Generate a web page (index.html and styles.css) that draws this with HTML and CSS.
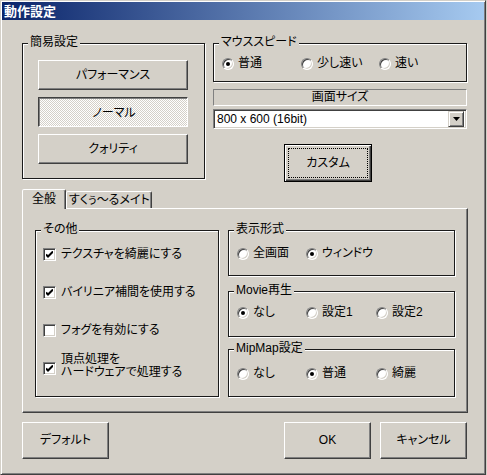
FILE: index.html
```html
<!DOCTYPE html>
<html lang="ja">
<head>
<meta charset="utf-8">
<title>動作設定</title>
<link rel="stylesheet" href="styles.css">
</head>
<body>
<div class="window">
  <div class="titlebar">動作設定</div>
  <div class="content">
    <div class="top-row">
      <div class="group group-easy">
        <span class="group-label">簡易設定</span>
        <div class="easy-buttons">
          <button class="btn btn-wide">パフォーマンス</button>
          <button class="btn btn-wide btn-pressed"><span class="pressed-text">ノーマル</span></button>
          <button class="btn btn-wide">クォリティ</button>
        </div>
      </div>
      <div class="right-col">
        <div class="group group-mouse">
          <span class="group-label">マウススピード</span>
          <div class="radio-row">
            <label class="radio-item w79"><span class="radio checked"></span>普通</label>
            <label class="radio-item w78"><span class="radio"></span>少し速い</label>
            <label class="radio-item"><span class="radio"></span>速い</label>
          </div>
        </div>
        <div class="header-bar">画面サイズ</div>
        <div class="select">
          <span class="select-text">800 x 600 (16bit)</span>
          <span class="select-btn"><svg width="7" height="4" viewBox="0 0 7 4"><path d="M0 0h7L3.5 4z" fill="#000"/></svg></span>
        </div>
        <button class="btn btn-default">カスタム</button>
      </div>
    </div>

    <div class="tabs">
      <div class="tab tab-active">全般</div>
      <div class="tab">すくぅ〜るメイト</div>
    </div>
    <div class="panel">
      <div class="group group-other">
        <span class="group-label">その他</span>
        <div class="check-list">
          <label class="check-item"><span class="checkbox checked"><svg width="7" height="7" viewBox="0 0 7 7"><path d="M0 2.5l2 2 5-5" fill="none" stroke="#000" stroke-width="2" transform="translate(0 1)"/></svg></span><span>テクスチャを綺麗にする</span></label>
          <label class="check-item"><span class="checkbox checked"><svg width="7" height="7" viewBox="0 0 7 7"><path d="M0 2.5l2 2 5-5" fill="none" stroke="#000" stroke-width="2" transform="translate(0 1)"/></svg></span><span>バイリニア補間を使用する</span></label>
          <label class="check-item"><span class="checkbox"></span><span>フォグを有効にする</span></label>
          <label class="check-item check-multi"><span class="checkbox checked"><svg width="7" height="7" viewBox="0 0 7 7"><path d="M0 2.5l2 2 5-5" fill="none" stroke="#000" stroke-width="2" transform="translate(0 1)"/></svg></span><span class="multi-text">頂点処理を<br>ハードウェアで処理する</span></label>
        </div>
      </div>
      <div class="panel-right">
        <div class="group group-display">
          <span class="group-label">表示形式</span>
          <div class="radio-row">
            <label class="radio-item w69"><span class="radio"></span>全画面</label>
            <label class="radio-item"><span class="radio checked"></span>ウィンドウ</label>
          </div>
        </div>
        <div class="group group-movie">
          <span class="group-label">Movie再生</span>
          <div class="radio-row">
            <label class="radio-item w69"><span class="radio checked"></span>なし</label>
            <label class="radio-item w70"><span class="radio"></span>設定1</label>
            <label class="radio-item"><span class="radio"></span>設定2</label>
          </div>
        </div>
        <div class="group group-mip">
          <span class="group-label">MipMap設定</span>
          <div class="radio-row">
            <label class="radio-item w69"><span class="radio"></span>なし</label>
            <label class="radio-item w70"><span class="radio checked"></span>普通</label>
            <label class="radio-item"><span class="radio"></span>綺麗</label>
          </div>
        </div>
      </div>
    </div>

    <div class="bottom-row">
      <button class="btn btn-bottom">デフォルト</button>
      <button class="btn btn-bottom btn-ok">OK</button>
      <button class="btn btn-bottom btn-cancel">キャンセル</button>
    </div>
  </div>
</div>
</body>
</html>
```
FILE: styles.css
```css
* { box-sizing: border-box; }
html, body { margin: 0; padding: 0; }
body {
  background: #D4D0C8;
  font-family: "Liberation Sans", "Noto Sans CJK JP", sans-serif;
  font-size: 12px;
  line-height: 13px;
  color: #000;
  font-feature-settings: "palt";
}
.window {
  width: 486px;
  height: 475px;
  background: #D4D0C8;
  border: 1px solid;
  border-color: #D4D0C8 #404040 #404040 #D4D0C8;
  padding: 1px;
  box-shadow: inset 1px 1px #fff, inset -1px -1px #808080;
}
.titlebar {
  height: 18px;
  background: linear-gradient(to right, #0A246A, #A6CAF0);
  color: #fff;
  font-weight: bold;
  font-size: 13px;
  line-height: 18px;
  padding-left: 2px;
  font-family: "Noto Sans CJK JP", sans-serif;
}
.content { padding: 23px 0 0 20px; }

/* generic controls */
.btn {
  display: flex;
  align-items: center;
  justify-content: center;
  background: #D4D0C8;
  border: 1px solid;
  border-color: #fff #404040 #404040 #fff;
  box-shadow: inset -1px -1px #808080;
  font: inherit;
  color: #000;
  padding: 0;
  margin: 0;
}
.btn-pressed {
  border-color: #404040 #fff #fff #404040;
  box-shadow: inset 1px 1px #808080;
  background-color: #fff;
  background-image: conic-gradient(#D4D0C8 25%, transparent 0 50%, #D4D0C8 0 75%, transparent 0);
  background-size: 2px 2px;
}
.pressed-text { position: relative; left: 1px; top: 1px; }

.group {
  position: relative;
  border: 1px solid #1a1a1a;
  box-shadow: inset 1px 1px #fff, 1px 1px #fff;
}
.group-label {
  position: absolute;
  top: -8px;
  left: 5px;
  padding: 0 2px;
  background: #D4D0C8;
  line-height: 13px;
  white-space: nowrap;
}

.radio-row { display: flex; }
.radio-item {
  display: flex;
  align-items: center;
  gap: 4px;
  height: 13px;
  white-space: nowrap;
}
.w79 { width: 79px; }
.w78 { width: 78px; }
.w69 { width: 69px; }
.w70 { width: 70px; }
.radio {
  position: relative;
  flex: none;
  width: 12px;
  height: 12px;
  border-radius: 50%;
  background: #fff;
  border: 1px solid;
  border-color: #808080 #fff #fff #808080;
  box-shadow: inset 1px 1px #404040, inset -1px -1px #D4D0C8;
}
.radio.checked::after {
  content: "";
  position: absolute;
  left: 3px;
  top: 3px;
  width: 4px;
  height: 4px;
  border-radius: 50%;
  background: #000;
}

/* top row */
.top-row { display: flex; gap: 8px; align-items: flex-start; }
.group-easy { width: 183px; height: 136px; padding: 16px 0 0 15px; }
.easy-buttons { display: flex; flex-direction: column; gap: 7px; }
.btn-wide { width: 150px; height: 30px; }

.right-col { width: 254px; display: flex; flex-direction: column; }
.group-mouse { height: 39px; padding: 13px 0 0 8px; }
.header-bar {
  margin-top: 7px;
  height: 17px;
  border: 1px solid;
  border-color: #808080 #fff #fff #808080;
  text-align: center;
  line-height: 15px;
}
.select {
  margin-top: 3px;
  height: 20px;
  display: flex;
  align-items: center;
  background: #fff;
  border: 1px solid;
  border-color: #808080 #fff #fff #808080;
  box-shadow: inset 1px 1px #404040, inset -1px -1px #D4D0C8;
  padding: 2px;
}
.select-text { flex: 1; padding-left: 1px; line-height: 14px; }
.select-btn {
  width: 16px;
  height: 16px;
  display: flex;
  align-items: center;
  justify-content: center;
  background: #D4D0C8;
  border: 1px solid;
  border-color: #D4D0C8 #404040 #404040 #D4D0C8;
  box-shadow: inset 1px 1px #fff, inset -1px -1px #808080;
}
.btn-default {
  position: relative;
  margin-top: 15px;
  margin-left: 71px;
  width: 88px;
  height: 38px;
  border: 1px solid #000;
  box-shadow: inset 1px 1px #fff, inset -1px -1px #404040, inset -2px -2px #808080;
}
.btn-default::after {
  content: "";
  position: absolute;
  inset: 3px;
  border: 1px dotted #000;
}

/* tabs */
.tabs { display: flex; align-items: flex-end; margin-top: 7px; height: 19px; position: relative; z-index: 1; }
.tab {
  height: 17px;
  padding: 0 6px;
  border: 1px solid;
  border-bottom: none;
  border-color: #fff #404040 transparent #fff;
  box-shadow: inset -1px 0 #808080;
  border-radius: 2px 2px 0 0;
  line-height: 16px;
  text-align: center;
  white-space: nowrap;
  background: #D4D0C8;
}
.tab-active { width: 44px; height: 20px; margin-bottom: -1px; line-height: 19px; }
.tabs .tab:nth-child(2) { width: 86px; padding: 0 2px; }

.panel {
  width: 446px;
  height: 205px;
  border: 1px solid;
  border-color: #fff #404040 #404040 #fff;
  box-shadow: inset -1px -1px #808080;
  padding: 21px 0 0 12px;
  display: flex;
  gap: 9px;
  align-items: flex-start;
}
.group-other { width: 184px; height: 167px; padding: 17px 0 0 7px; }
.check-list { display: flex; flex-direction: column; gap: 25px; }
.check-item { display: flex; align-items: center; gap: 5px; height: 13px; white-space: nowrap; }
.checkbox {
  flex: none;
  width: 13px;
  height: 13px;
  display: flex;
  align-items: center;
  justify-content: center;
  background: #fff;
  border: 1px solid;
  border-color: #808080 #fff #fff #808080;
  box-shadow: inset 1px 1px #404040, inset -1px -1px #D4D0C8;
}
.multi-text { line-height: 13px; margin-top: -5px; }

.panel-right { width: 227px; display: flex; flex-direction: column; }
.group-display { height: 46px; padding: 16px 0 0 8px; }
.group-movie { height: 46px; margin-top: 15px; padding: 14px 0 0 8px; }
.group-mip { height: 48px; margin-top: 12px; padding: 17px 0 0 8px; }

.bottom-row { display: flex; margin-top: 9px; width: 445px; }
.btn-bottom { width: 87px; height: 37px; }
.btn-ok { margin-left: auto; }
.btn-cancel { margin-left: 9px; }
```
